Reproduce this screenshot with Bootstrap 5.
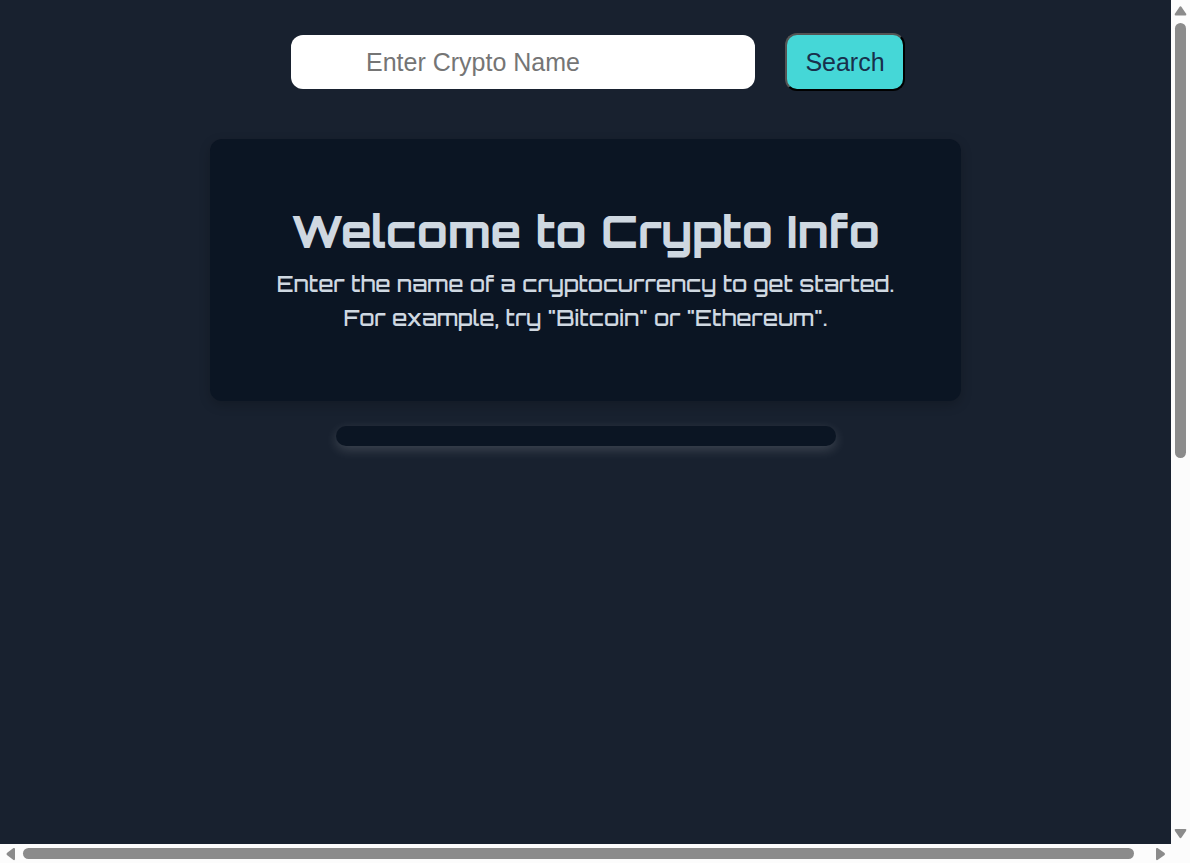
<!DOCTYPE html>
<html lang="en">
<head>
<meta charset="utf-8">
<meta name="viewport" content="width=device-width, initial-scale=1">
<title>Crypto Info</title>
<link rel="stylesheet" href="https://cdn.jsdelivr.net/npm/bootstrap@5.3.0/dist/css/bootstrap.min.css">
<style>
body { background: #18212f; color: #cfd8e1; font-family: "Liberation Sans", Arial, sans-serif; }
.window { display: grid; grid-template: minmax(0, 1fr) 19px / minmax(0, 1fr) 19px; }
.search-row { gap: 30px; padding-top: 33px; padding-left: 25px; }
.search-box { width: 464px; height: 54px; padding: 0 75px; border-radius: 12px; font-size: 25px; background: #fff; }
.search-box::placeholder { color: #757575; opacity: 1; }
.search-btn { width: 120px; height: 58px; padding: 2px 0 0; border: 2px outset #000; border-radius: 12px; background: #45d7d7; color: #18304c; font-size: 25px; }
.welcome { width: 751px; max-width: 100%; margin-top: 48px; padding: 64px 48px 66px; border-radius: 12px; background: #0b1523; box-shadow: 0 4px 12px rgba(0, 0, 0, .2); font-family: Orbitron, "DejaVu Sans", sans-serif; }
.welcome h1 { margin: 0 0 8px; font-size: 45px; line-height: 56px; font-weight: 800; white-space: nowrap; }
.welcome p { margin: 0; font-size: 22px; line-height: 34px; font-weight: 500; white-space: nowrap; }
.result { width: 500px; max-width: 100%; height: 20px; margin-top: 25px; border-radius: 10px; background: #0b1523; box-shadow: 0 4px 12px rgba(255, 255, 255, .16); }
.track { background: #fcfcfc; }
.thumb { background: #8b8b8b; border-radius: 6px; }
.track svg { fill: #8b8b8b; flex: none; }
</style>
</head>
<body>
<div class="window vh-100">
  <main class="d-flex flex-column align-items-center overflow-hidden">
    <form class="search-row d-flex align-items-center justify-content-center" onsubmit="return false">
      <input type="text" class="search-box border-0" placeholder="Enter Crypto Name" aria-label="Enter Crypto Name">
      <button type="submit" class="search-btn">Search</button>
    </form>
    <section class="welcome d-flex flex-column align-items-center text-center">
      <h1>Welcome to Crypto Info</h1>
      <p>Enter the name of a cryptocurrency to get started.<br>For example, try "Bitcoin" or "Ethereum".</p>
    </section>
    <div class="result"></div>
  </main>
  <div class="track d-flex flex-column align-items-center" aria-hidden="true">
    <svg width="19" height="23"><path d="M4.5 15.5Q3 15.500 4 13.500L8.300 7.200Q9.500 5.500 10.700 7.200L15 13.500Q16 15.500 14.500 15.500Z"/></svg>
    <div class="thumb" style="width:11px;flex:435 1 0"></div>
    <div style="flex:365 1 0"></div>
    <svg width="19" height="21"><path d="M4.500 6Q3 6 4 8L8.300 14.300Q9.500 16 10.700 14.300L15 8Q16 6 14.500 6Z"/></svg>
  </div>
  <div class="track d-flex align-items-center" aria-hidden="true">
    <svg width="23" height="19"><path d="M15 5Q15 3.500 13.500 4L7.200 8.800Q5.500 10 7.200 11.200L13.500 16Q15 16.500 15 15Z"/></svg>
    <div class="thumb" style="height:11px;flex:1111 1 0"></div>
    <div style="flex:16 1 0"></div>
    <svg width="21" height="19"><path d="M6 5Q6 3.500 7.500 4L14.300 8.800Q16 10 14.300 11.200L7.500 16Q6 16.500 6 15Z"/></svg>
  </div>
  <div class="track"></div>
</div>
<script src="https://cdn.jsdelivr.net/npm/bootstrap@5.3.0/dist/js/bootstrap.bundle.min.js"></script>
</body>
</html>
